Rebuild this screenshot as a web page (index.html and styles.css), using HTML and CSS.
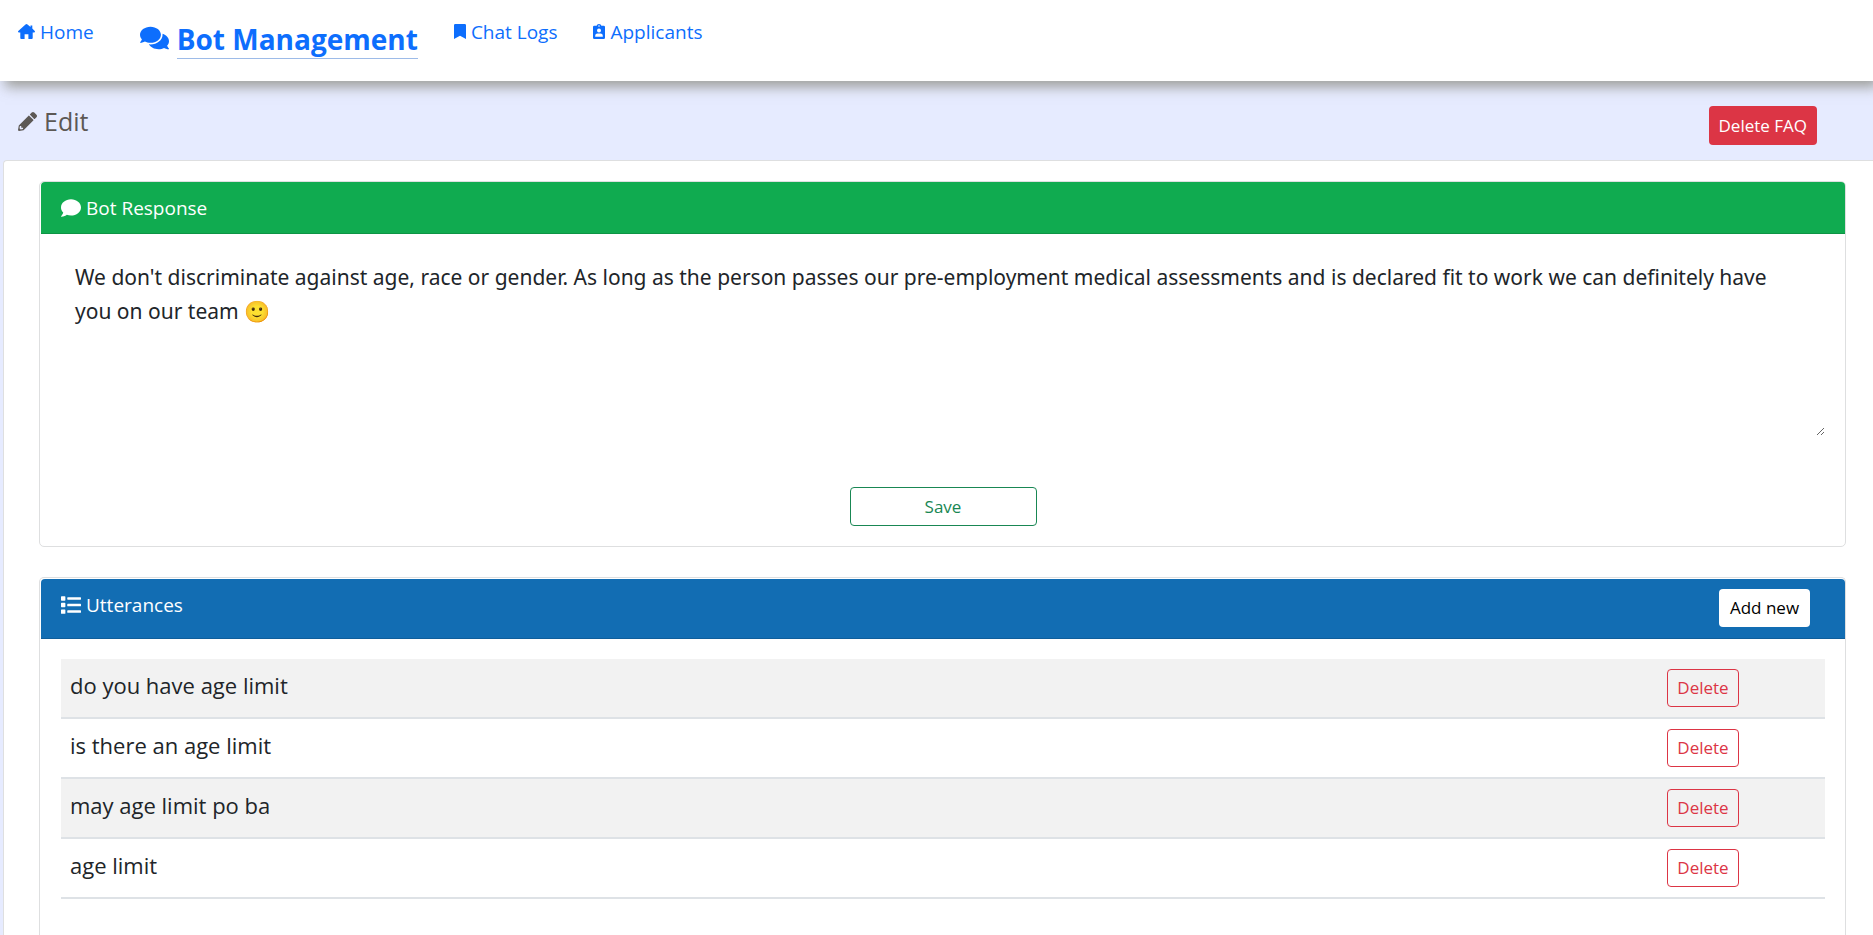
FILE: index.html
```html
<!DOCTYPE html>
<html lang="en">
<head>
<meta charset="utf-8">
<title>Bot Management</title>
<link rel="stylesheet" href="styles.css">
</head>
<body>
<header class="topbar">
  <nav class="nav">
    <a class="nav-link" href="#"><svg class="icon-home" viewBox="0 0 17 15" aria-hidden="true"><path d="M7.500.5Q8.500-.4 9.500.5L12.500 3V1.500H14.300V4.600L17 7.200Q17 8.400 16 8.400H14.700V14Q14.700 15 13.700 15H10.400V10.200H6.600V15H3.300Q2.300 15 2.300 14V8.400H1Q0 8.400 0 7.200Z"/></svg>Home</a>
    <a class="nav-link active" href="#"><svg class="icon-chats" viewBox="0 0 576 512" aria-hidden="true"><path d="M416 192c0-88.400-93.100-160-208-160S0 103.600 0 192c0 34.300 14.100 65.900 38 92-13.400 30.200-35.500 54.200-35.800 54.500-2.200 2.300-2.800 5.700-1.500 8.700S4.800 352 8 352c36.600 0 66.900-12.300 88.700-25 32.200 15.700 70.300 25 111.300 25 114.900 0 208-71.600 208-160zm122 220c23.900-26 38-57.700 38-92 0-66.900-53.500-124.200-129.300-148.100.9 6.600 1.300 13.300 1.300 20.100 0 105.900-107.700 192-240 192-10.800 0-21.300-.8-31.700-1.900C207.800 439.600 281.800 480 368 480c41 0 79.100-9.200 111.300-25 21.800 12.700 52.100 25 88.700 25 3.200 0 6.100-1.900 7.300-4.800 1.300-2.900.7-6.300-1.500-8.700-.3-.3-22.400-24.200-35.800-54.500z"/></svg><span class="active-text">Bot Management</span></a>
    <a class="nav-link" href="#"><svg class="icon-mark" viewBox="0 0 12 15" aria-hidden="true"><path d="M1.300 0h9.400Q12 0 12 1.300V15L6 11.800 0 15V1.300Q0 0 1.300 0Z"/></svg>Chat Logs</a>
    <a class="nav-link" href="#"><svg class="icon-mark" viewBox="0 0 12 15" aria-hidden="true"><path fill-rule="evenodd" d="M1.300 1.800H3.600Q3.900 0 6 0T8.400 1.800H10.700Q12 1.800 12 3.100V13.700Q12 15 10.700 15H1.300Q0 15 0 13.700V3.100Q0 1.800 1.300 1.800ZM6 1.200A.8.8 0 1 0 6 2.800.8.8 0 1 0 6 1.200ZM6 4.600A2 2 0 1 0 6 8.600 2 2 0 1 0 6 4.600ZM2.200 12.800H9.800V11.700Q9.800 9.600 7.500 9.600H4.500Q2.200 9.600 2.200 11.700Z"/></svg>Applicants</a>
  </nav>
</header>
<main class="page">
  <div class="page-head">
    <h1 class="page-title"><svg class="icon-pencil" viewBox="0 0 512 512" aria-hidden="true"><path d="M497.900 142.100l-46.100 46.100c-4.700 4.700-12.300 4.700-17 0l-111-111c-4.700-4.700-4.700-12.300 0-17l46.100-46.100c18.700-18.700 49.100-18.700 67.900 0l60.100 60.100c18.800 18.700 18.800 49.100 0 67.900zM284.200 99.800L21.600 362.400.4 483.900c-2.900 16.400 11.400 30.600 27.800 27.800l121.500-21.300 262.600-262.600c4.700-4.700 4.700-12.300 0-17l-111-111c-4.800-4.700-12.400-4.700-17.100 0zM88 424h48v36.300l-64.500 11.300-31.100-31.100L51.700 376H88v48z"/></svg>Edit</h1>
    <button class="btn btn-danger" type="button">Delete FAQ</button>
  </div>
  <div class="sheet">
    <section class="card">
      <h2 class="card-head green"><label class="card-title" for="response"><svg class="icon-head" viewBox="0 0 512 512" aria-hidden="true"><path d="M256 32C114.600 32 0 125.100 0 240c0 49.600 21.400 95 57 130.700C44.500 421.100 2.700 466 2.200 466.500c-2.200 2.300-2.800 5.700-1.500 8.700S4.800 480 8 480c66.300 0 116-31.800 140.600-51.400 32.700 12.300 69 19.400 107.400 19.400 141.400 0 256-93.100 256-208S397.400 32 256 32z"/></svg>Bot Response</label></h2>
      <form class="card-body response-form">
        <textarea id="response" class="response" rows="5">We don't discriminate against age, race or gender. As long as the person passes our pre-employment medical assessments and is declared fit to work we can definitely have you on our team 🙂</textarea>
        <button class="btn btn-save" type="button">Save</button>
      </form>
    </section>
    <section class="card card-fill">
      <div class="card-head blue">
        <h2 class="card-title"><svg class="icon-head" viewBox="0 0 512 512" aria-hidden="true"><path d="M16 32h80q16 0 16 16v80q0 16-16 16H16q-16 0-16-16V48q0-16 16-16zm0 168h80q16 0 16 16v80q0 16-16 16H16q-16 0-16-16v-80q0-16 16-16zm0 168h80q16 0 16 16v80q0 16-16 16H16q-16 0-16-16v-80q0-16 16-16zM176 56h320q16 0 16 16v32q0 16-16 16H176q-16 0-16-16V72q0-16 16-16zm0 168h320q16 0 16 16v32q0 16-16 16H176q-16 0-16-16v-32q0-16 16-16zm0 168h320q16 0 16 16v32q0 16-16 16H176q-16 0-16-16v-32q0-16 16-16z"/></svg>Utterances</h2>
        <button class="btn btn-light" type="button">Add new</button>
      </div>
      <div class="card-body">
        <table class="utterances">
          <tbody>
            <tr><td>do you have age limit</td><td class="action"><button class="btn btn-delete" type="button">Delete</button></td></tr>
            <tr><td>is there an age limit</td><td class="action"><button class="btn btn-delete" type="button">Delete</button></td></tr>
            <tr><td>may age limit po ba</td><td class="action"><button class="btn btn-delete" type="button">Delete</button></td></tr>
            <tr><td>age limit</td><td class="action"><button class="btn btn-delete" type="button">Delete</button></td></tr>
          </tbody>
        </table>
      </div>
    </section>
  </div>
</main>
</body>
</html>
```
FILE: styles.css
```css
*, *::before, *::after { box-sizing: border-box; }

body {
  margin: 0;
  min-height: 100vh;
  display: flex;
  flex-direction: column;
  overflow-x: hidden;
  background: #e6ebff;
  color: #212529;
  font-family: "Segoe UI", "Open Sans", "Noto Sans", sans-serif;
  font-size: 18px;
  line-height: 24px;
}

svg { fill: currentColor; flex: none; }
h1, h2 { margin: 0; font-weight: 500; }

.topbar {
  position: relative;
  padding: 20px 18px 22px;
  background: #fff;
  box-shadow: 5px 6px 12px rgba(140, 140, 130, .8);
}
.nav { display: flex; align-items: flex-start; gap: 36px; }
.nav-link {
  display: flex;
  align-items: flex-start;
  gap: 5px;
  color: #0d6efd;
  font-size: 19px;
  text-decoration: none;
}
.nav-link.active {
  gap: 8px;
  margin-left: 10px;
  font-size: 28px;
  font-weight: 700;
  line-height: 38px;
}
.active-text { border-bottom: 1px solid #9dbbe8; }
.icon-home { width: 17px; height: 15px; margin-top: 4px; }
.icon-chats { width: 29px; height: 26px; margin-top: 5px; }
.icon-mark { width: 12px; height: 15px; margin-top: 4px; }

.page { flex: 1; display: flex; flex-direction: column; }
.page-head {
  display: flex;
  justify-content: space-between;
  align-items: flex-start;
  padding: 25px 56px 15px 18px;
}
.page-title {
  display: flex;
  align-items: center;
  gap: 7px;
  color: #5c5855;
  font-size: 25px;
  line-height: 30px;
}
.icon-pencil { width: 19px; height: 19px; }

.btn {
  height: 39px;
  padding: 0 9px;
  border: 1px solid transparent;
  border-radius: 4px;
  background: transparent;
  font-family: inherit;
  font-size: 17px;
  line-height: 24px;
  cursor: pointer;
}
.btn-danger { background: #dc3545; color: #fff; }
.btn-light { background: #fff; color: #000; min-width: 91px; height: 38px; }
.btn-delete { border-color: #dc3545; color: #dc3545; min-width: 72px; height: 38px; }
.btn-save { border-color: #198754; color: #198754; width: 187px; }

.sheet {
  flex: 1;
  display: flex;
  flex-direction: column;
  gap: 30px;
  margin-left: 3px;
  padding: 20px 27px 0 35px;
  border: 1px solid #dedfe0;
  border-width: 1px 0 0 1px;
  border-radius: 4px 0 0 0;
  background: #fff;
}
.card { padding: 0 0 0 1px; border: 1px solid #dedfe0; border-radius: 5px; background: #fff; }
.card-fill {
  flex: 1;
  border-bottom: 0;
  border-radius: 5px 5px 0 0;
}
.card-head {
  display: flex;
  justify-content: space-between;
  align-items: flex-start;
  padding: 14px 20px 13px;
  border-bottom: 1px solid rgba(0, 0, 0, .13);
  border-radius: 4px 4px 0 0;
  color: #fff;
}
.green { background: #10ab50; }
.blue { margin-top: 1px; padding: 10px 35px 11px 20px; background: #126db3; }
.blue .card-title { padding-top: 4px; }
.card-title { display: flex; align-items: center; gap: 5px; font-size: 19px; font-weight: 500; line-height: 24px; }
.icon-head { width: 20px; height: 20px; }
.card-body { padding: 20px; }

.response-form { display: flex; flex-direction: column; align-items: center; gap: 51px; }
.response {
  display: block;
  width: 100%;
  padding: 6px 32px 6px 14px;
  border: 0;
  outline: 0;
  background: #fff;
  color: #212529;
  font-family: "Segoe UI", "Noto Sans", "Open Sans", sans-serif;
  font-size: 21px;
  line-height: 34px;
}

.utterances { width: 100%; border-collapse: separate; border-spacing: 0; }
.utterances td {
  height: 60px;
  padding: 10px 9px;
  border-bottom: 2px solid #dee2e6;
  font-size: 22px;
  line-height: 32px;
  vertical-align: top;
}
.utterances tr:nth-child(odd) td { background: #f2f2f2; }
.utterances .action { width: 167px; }
.action .btn { display: block; }
```
